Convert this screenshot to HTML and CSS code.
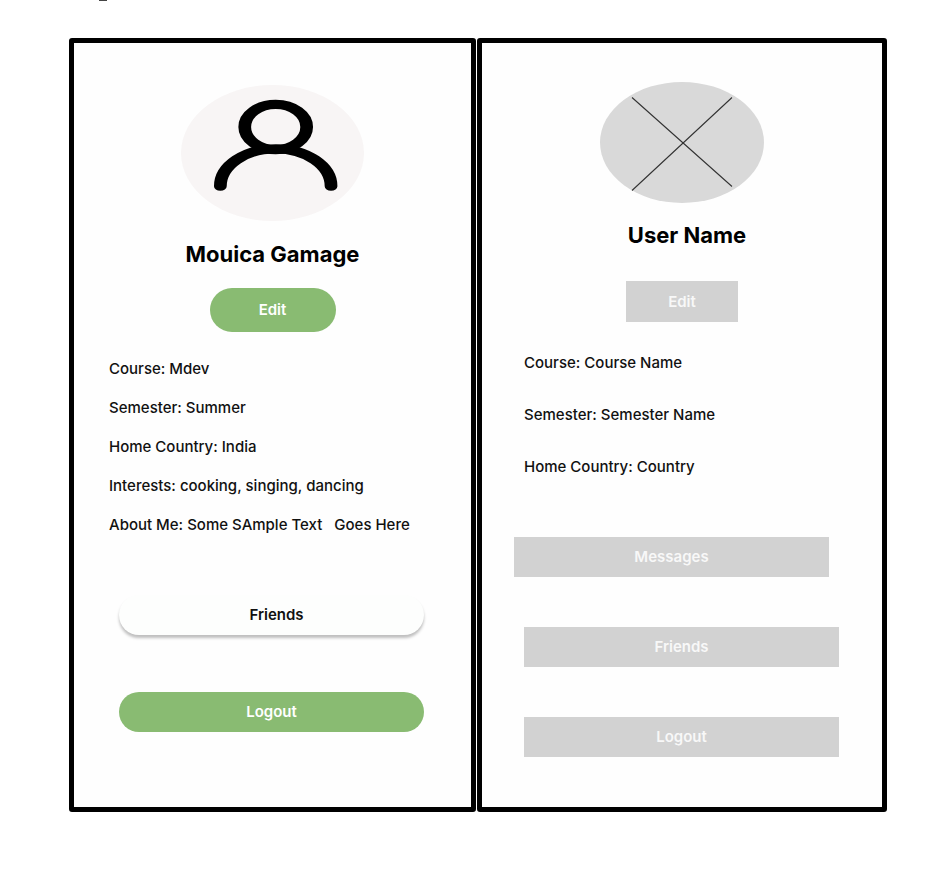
FILE: index.html
```html
<!DOCTYPE html>
<html lang="en">
<head>
<meta charset="utf-8">
<meta name="viewport" content="width=device-width, initial-scale=1">
<title>Profile</title>
<link rel="stylesheet" href="styles.css">
</head>
<body>
<header class="topline"><div class="topline-mark"></div></header>
<main class="board">
  <section class="frame frame-final">
    <svg class="avatar" viewBox="0 0 183 136" aria-hidden="true">
      <ellipse cx="91.500" cy="68" rx="91.500" ry="68" fill="#f8f5f5"/>
      <g transform="translate(94.700 0) scale(1.37 1)" fill="none" stroke="#000" stroke-width="9.300" stroke-linecap="round">
        <circle cx="0" cy="42" r="22.600"/>
        <path d="M-40.400 101.200A40.400 37.400 0 0 1 40.400 101.200"/>
      </g>
    </svg>
    <h1 class="name">Mouica Gamage</h1>
    <button type="button" class="button edit">Edit</button>
    <ul class="details">
      <li>Course: Mdev</li>
      <li>Semester: Summer</li>
      <li>Home Country: India</li>
      <li>Interests: cooking, singing, dancing</li>
      <li>About Me: Some SAmple Text &nbsp; Goes Here</li>
    </ul>
    <div class="actions">
      <button type="button" class="button button-light">Friends</button>
      <button type="button" class="button">Logout</button>
    </div>
  </section>
  <section class="frame frame-wire">
    <svg class="avatar" viewBox="0 0 164 121" aria-hidden="true">
      <ellipse cx="82" cy="60.500" rx="82" ry="60.500" fill="#d9d9d9"/>
      <path d="M32 15.500L132 104.500M132 15.500L32 108.500" stroke="#333" stroke-width="1.100"/>
    </svg>
    <h1 class="name">User Name</h1>
    <button type="button" class="button edit">Edit</button>
    <ul class="details">
      <li>Course: Course Name</li>
      <li>Semester: Semester Name</li>
      <li>Home Country: Country</li>
    </ul>
    <div class="actions">
      <button type="button" class="button button-messages">Messages</button>
      <button type="button" class="button">Friends</button>
      <button type="button" class="button">Logout</button>
    </div>
  </section>
</main>
</body>
</html>
```
FILE: styles.css
```css
* {
  box-sizing: border-box;
}

body {
  margin: 0;
  background: #fff;
  color: #111;
  font-family: Inter, "Liberation Sans", sans-serif;
}

.topline {
  height: 38px;
  padding-left: 99px;
}

.topline-mark {
  width: 8px;
  height: 1px;
  background: #444;
}

.board {
  display: grid;
  grid-template-columns: 407fr 410fr;
  gap: 1px;
  padding: 0 43px 82px 69px;
}

.frame {
  display: flex;
  flex-direction: column;
  align-items: center;
  border: 5px solid #000;
  border-radius: 3px;
  background: #fefefe;
}

.frame-final {
  padding: 42px 0 75px;
}

.frame-wire {
  padding: 39px 0 50px;
}

.avatar {
  display: block;
}

.frame-final .avatar {
  width: 183px;
  height: 136px;
}

.frame-wire .avatar {
  width: 164px;
  height: 121px;
}

.name {
  margin: 20px 0;
  color: #000;
  font-size: 22px;
  font-weight: 700;
  line-height: 27px;
}

.frame-wire .name {
  margin: 19px 0 32px;
  padding-left: 10px;
}

.button {
  width: 100%;
  height: 40px;
  padding: 0;
  border: 0;
  border-radius: 20px;
  background: #89bb72;
  color: #fff;
  font: 600 15px/20px Inter, "Liberation Sans", sans-serif;
}

.button-light {
  padding-left: 10px;
  background: #fdfefd;
  box-shadow: 0 3px 3px rgba(0, 0, 0, 0.25);
  color: #111;
}

.frame-wire .button {
  border-radius: 0;
  background: #d2d2d2;
  color: #f8f8f8;
}

.frame-final .edit {
  width: 126px;
  height: 44px;
  border-radius: 22px;
}

.frame-wire .edit {
  width: 112px;
  height: 41px;
}

.details {
  display: grid;
  align-self: stretch;
  margin: 0;
  list-style: none;
  font-size: 15px;
  font-weight: 500;
  line-height: 20px;
}

.frame-final .details {
  gap: 19px;
  padding: 27px 35px 60px;
}

.frame-wire .details {
  gap: 32px;
  padding: 31px 42px 60px;
}

.actions {
  display: grid;
  align-self: stretch;
}

.frame-final .actions {
  gap: 57px;
  padding: 0 47px 0 45px;
}

.frame-wire .actions {
  gap: 50px;
  padding: 0 43px 0 42px;
}

.button-messages {
  margin-left: -10px;
}
```
